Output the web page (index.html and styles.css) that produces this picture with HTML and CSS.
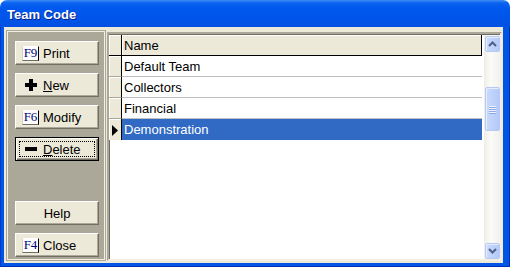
FILE: index.html
```html
<!DOCTYPE html>
<html lang="en">
<head>
    <meta charset="UTF-8">
    <title>Team Code</title>
    <link rel="stylesheet" href="styles.css">
</head>
<body>

<div class="window">
    <div class="titlebar">Team Code</div>
    <div class="frame">
        <div class="client">

            <div class="toolbar">
                <button class="btn"><span class="key">F9</span>Print</button>
                <button class="btn">
                    <span class="icon">
                        <svg width="12" height="12" viewBox="0 0 12 12"><path d="M4 0h4v4h4v4h-4v4h-4v-4h-4v-4h4z" fill="#000"/></svg>
                    </span><u>N</u>ew
                </button>
                <button class="btn"><span class="key">F6</span>Modify</button>
                <button class="btn default">
                    <span class="icon">
                        <svg width="12" height="4" viewBox="0 0 12 4"><rect width="12" height="4" fill="#000"/></svg>
                    </span><u>D</u>elete
                </button>
                <button class="btn center help">Help</button>
                <button class="btn"><span class="key">F4</span>Close</button>
            </div>

            <div class="grid">
                <div class="table">
                    <div class="row head">
                        <div class="sel"></div>
                        <div class="cell">Name</div>
                    </div>
                    <div class="row">
                        <div class="sel"></div>
                        <div class="cell">Default Team</div>
                    </div>
                    <div class="row">
                        <div class="sel"></div>
                        <div class="cell">Collectors</div>
                    </div>
                    <div class="row">
                        <div class="sel"></div>
                        <div class="cell">Financial</div>
                    </div>
                    <div class="row current">
                        <div class="sel">
                            <svg width="6" height="11" viewBox="0 0 6 11"><path d="M0 0l6 5.5-6 5.5z" fill="#000"/></svg>
                        </div>
                        <div class="cell">Demonstration</div>
                    </div>
                </div>

                <div class="scrollbar">
                    <div class="sbtn">
                        <svg width="9" height="6" viewBox="0 0 9 6"><path d="M1 5l3.5-3.5 3.5 3.5" stroke="#4d6185" stroke-width="2" fill="none"/></svg>
                    </div>
                    <div class="thumb">
                        <span></span><span></span><span></span><span></span>
                    </div>
                    <div class="sbtn down">
                        <svg width="9" height="6" viewBox="0 0 9 6"><path d="M1 1l3.5 3.5 3.5-3.5" stroke="#4d6185" stroke-width="2" fill="none"/></svg>
                    </div>
                </div>
            </div>

        </div>
    </div>
</div>

</body>
</html>
```

FILE: styles.css
```css
body {
    margin: 0;
    background: #fff;
    font-family: "Liberation Sans", Arial, sans-serif;
    font-size: 13px;
}
.window {
    width: 510px;
    height: 267px;
    display: flex;
    flex-direction: column;
}
.titlebar {
    height: 27px;
    box-sizing: border-box;
    padding: 7px 0 0 7px;
    line-height: 16px;
    font-weight: bold;
    color: #fff;
    text-shadow: 1px 1px #0f1f8a;
    border-radius: 7px 7px 0 0;
    background: linear-gradient(#3d8ef5 0, #0a63f0 3px, #0058ee 8px, #0055ea 60%, #0050e2 100%);
}
.frame {
    flex: 1;
    display: flex;
    padding: 0 7px 4px 4px;
    background: #0055e5;
    box-shadow: inset 1px 0 #0038c8, inset -1px 0 #0030b8, inset 0 -1px #0030b8;
}
.client {
    flex: 1;
    display: flex;
    gap: 1px;
    padding: 3px 1px 2px 2px;
    background: #ece9d8;
}

/* left button panel */
.toolbar {
    width: 100px;
    box-sizing: border-box;
    display: flex;
    flex-direction: column;
    gap: 8px;
    padding: 10px 0 3px 8px;
    background: #aca899;
    border: 1px solid #aca899;
    box-shadow: inset 0 0 0 1px #f1efe2;
}
.btn {
    position: relative;
    width: 84px;
    height: 24px;
    box-sizing: border-box;
    display: flex;
    align-items: center;
    padding: 0 0 0 6px;
    font-family: inherit;
    font-size: 13px;
    color: #000;
    background: #ece9d8;
    border: 1px solid;
    border-color: #fff #716f64 #716f64 #fff;
    box-shadow: inset -1px -1px #aca899;
}
.btn.center {
    justify-content: center;
    padding: 0;
}
.btn.help {
    margin-top: auto;
}
.btn.default {
    border: 1px solid #000;
    box-shadow: inset 1px 1px #fff, inset -1px -1px #716f64, inset -2px -2px #aca899;
}
.btn.default::after {
    content: "";
    position: absolute;
    left: 3px;
    top: 3px;
    right: 3px;
    bottom: 3px;
    border: 1px dotted #000;
}
.btn u {
    text-decoration-thickness: 1px;
}
.key {
    width: 17px;
    height: 15px;
    box-sizing: border-box;
    margin-right: 4px;
    display: flex;
    align-items: center;
    justify-content: center;
    font-family: "Liberation Serif", "Times New Roman", serif;
    font-size: 13px;
    color: #00007f;
    background: #fdfdfb;
    border: 1px solid;
    border-color: #fff #000 #716f64 #d6d3c6;
}
.icon {
    width: 17px;
    margin-right: 4px;
    display: flex;
    justify-content: center;
}

/* data grid */
.grid {
    flex: 1;
    display: flex;
    margin-top: 2px;
    padding-top: 1px;
    background: #fff;
    border: 2px solid;
    border-color: #aca899 #f1efe2 #f1efe2 #aca899;
    box-shadow: inset 1px 1px #716f64;
}
.table {
    flex: 1;
    display: flex;
    flex-direction: column;
}
.row {
    display: flex;
    height: 21px;
}
.sel {
    width: 12px;
    display: flex;
    align-items: center;
    justify-content: center;
    background: #ece9d8;
    border-right: 1px solid #000;
    border-bottom: 1px solid #aca899;
    box-shadow: inset 1px 1px #fff;
}
.cell {
    width: 360px;
    display: flex;
    align-items: center;
    padding-left: 2px;
    box-sizing: border-box;
    border-bottom: 1px solid #c0c0c0;
}
.row.head .cell {
    background: #ece9d8;
    border-bottom: 1px solid #000;
    border-right: 1px solid #000;
    box-shadow: inset 1px 1px #fff;
}
.row.head .sel {
    border-bottom: 1px solid #000;
}
.row.current .cell {
    background: #316ac5;
    color: #fff;
    border-bottom-color: #316ac5;
}
.row.current .sel {
    border-bottom: none;
    padding-top: 1px;
}

/* scrollbar */
.scrollbar {
    width: 16px;
    box-sizing: border-box;
    display: flex;
    flex-direction: column;
    padding: 1px 0 0 1px;
    background: linear-gradient(to right, #eeede5, #fbfbf8 40%, #f3f1ec);
}
.sbtn,
.thumb {
    width: 15px;
    box-sizing: border-box;
    border: 1px solid #b6c9f3;
    border-radius: 2px;
    background: linear-gradient(to right, #cbdafc, #bed2fb 50%, #b4c9f7);
    box-shadow: inset 1px 1px #e6eefe;
}
.sbtn {
    height: 16px;
    display: flex;
    align-items: center;
    justify-content: center;
}
.sbtn.down {
    margin-top: auto;
}
.thumb {
    height: 44px;
    margin-top: 35px;
    display: flex;
    flex-direction: column;
    align-items: center;
    justify-content: center;
    gap: 1px;
}
.thumb span {
    width: 7px;
    height: 1px;
    background: #eef3fe;
    box-shadow: 0 1px #8faaeb;
}
```
